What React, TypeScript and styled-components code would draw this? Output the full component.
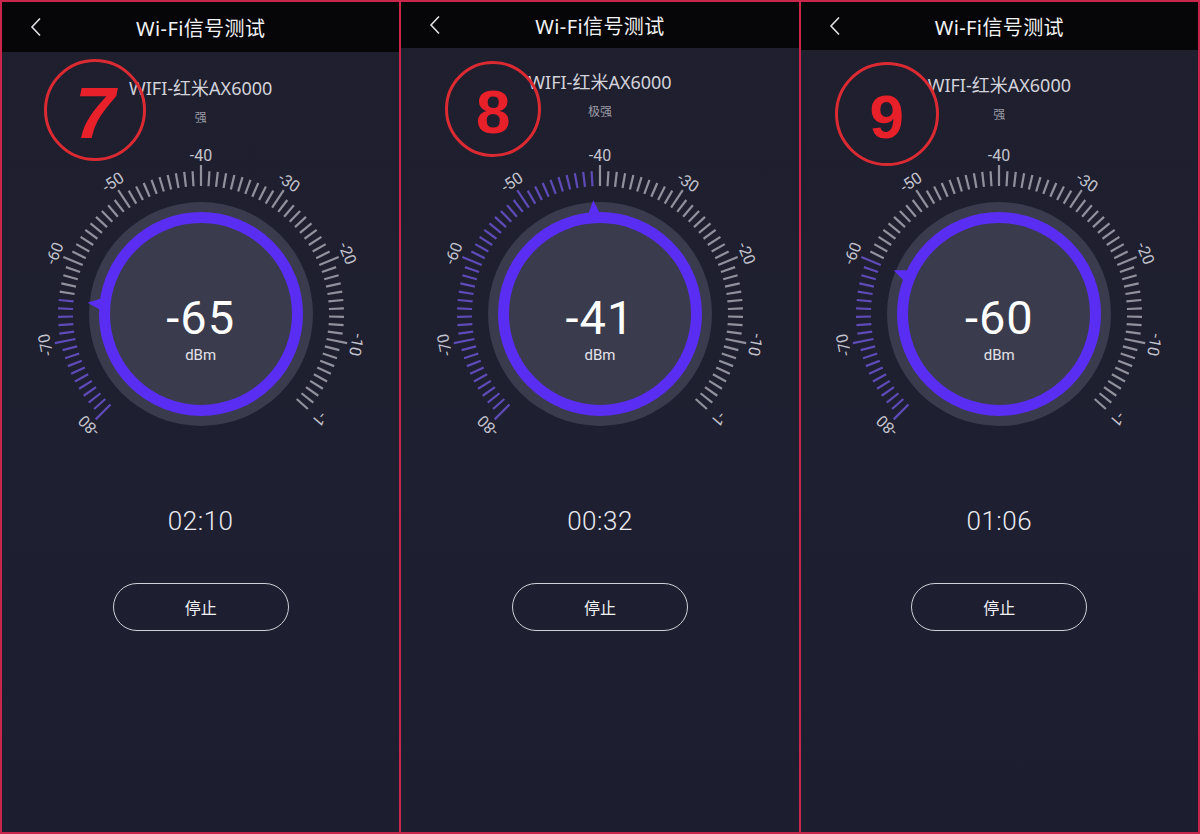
import React from 'react';
import styled, { createGlobalStyle } from 'styled-components';

const GlobalStyle = createGlobalStyle`
  html, body {
    margin: 0;
    padding: 0;
    background: #c8264a;
  }
  * {
    box-sizing: border-box;
  }
`;

// geometry of the gauge drawing
const G = { w: 360, h: 310, cx: 180, cy: 174 };
const STEP = 270 / 80;
const angleOf = (v: number) => -135 + (v + 80) * STEP;

type Shot = {
  id: number;
  headerH: number;
  name: string;
  level: string;
  value: number;
  time: string;
  mark: { x: number; y: number; r: number; size: number; italic?: boolean };
};

const shots: Shot[] = [
  { id: 7, headerH: 50, name: 'WIFI-红米AX6000', level: '强', value: -65, time: '02:10', mark: { x: 93, y: 108, r: 51, size: 72, italic: true } },
  { id: 8, headerH: 46, name: 'WIFI-红米AX6000', level: '极强', value: -41, time: '00:32', mark: { x: 92, y: 107, r: 48, size: 62 } },
  { id: 9, headerH: 48, name: 'WIFI-红米AX6000', level: '强', value: -60, time: '01:06', mark: { x: 86, y: 112, r: 52, size: 62 } },
];

const Page = styled.div`
  width: 1200px;
  height: 834px;
  padding: 2px;
  display: flex;
  gap: 2px;
  background: #c8264a;
`;

const Panel = styled.section`
  position: relative;
  flex: 1;
  display: flex;
  flex-direction: column;
  align-items: center;
  background: linear-gradient(180deg, #1f1f2e 0%, #1e1f30 60%, #1c1e30 100%);
  font-family: 'Noto Sans', 'Noto Sans CJK SC', sans-serif;
  overflow: hidden;
`;

const Header = styled.header<{ $h: number }>`
  width: 100%;
  height: ${(p) => p.$h}px;
  background: #060608;
  display: grid;
  grid-template-columns: 1fr auto 1fr;
  align-items: center;
`;

const Back = styled.div`
  padding-left: 28px;
  display: flex;
  align-items: center;
`;

const Title = styled.h1`
  margin: 0;
  font-size: 20px;
  font-weight: 400;
  color: #f2f2f4;
  letter-spacing: 0.4px;
`;

const Info = styled.div<{ $h: number }>`
  height: ${(p) => 138 - p.$h}px;
  padding-top: ${(p) => 26 - (50 - p.$h) / 2}px;
  display: flex;
  flex-direction: column;
  align-items: center;
`;

const NetName = styled.div`
  font-size: 18px;
  line-height: 20px;
  color: #d3d3db;
`;

const Level = styled.div`
  margin-top: 12px;
  font-size: 12px;
  line-height: 16px;
  color: #9c9ca6;
`;

const GaugeWrap = styled.div`
  display: grid;
  width: ${G.w}px;
  height: ${G.h}px;
  & > * {
    grid-area: 1 / 1;
  }
`;

const Readout = styled.div`
  align-self: start;
  justify-self: center;
  margin-top: 154px;
  display: flex;
  flex-direction: column;
  align-items: center;
  font-family: Roboto, 'Noto Sans', sans-serif;
  color: #fff;
`;

const Big = styled.div`
  font-size: 47px;
  line-height: 48px;
  font-weight: 400;
  letter-spacing: 1px;
`;

const Unit = styled.div`
  margin-top: 4px;
  font-size: 15px;
  line-height: 18px;
  color: #e2e2ea;
`;

const TickLabel = styled.text`
  font-family: Roboto, 'Noto Sans', sans-serif;
  font-size: 16px;
  fill: #c4c4ce;
`;

const Timer = styled.div`
  margin-top: 56px;
  font-family: Roboto, 'Noto Sans', sans-serif;
  font-size: 26px;
  line-height: 30px;
  font-weight: 300;
  color: #eaeaf0;
  letter-spacing: 0.5px;
`;

const StopButton = styled.button`
  margin-top: 47px;
  width: 176px;
  height: 48px;
  border-radius: 24px;
  border: 1.5px solid #cfd0d8;
  background: transparent;
  color: #f2f2f4;
  font-family: 'Noto Sans CJK SC', sans-serif;
  font-size: 16px;
`;

// red hand-drawn annotation over the screenshot
const Mark = styled.div<{ $x: number; $y: number; $r: number }>`
  position: absolute;
  left: ${(p) => p.$x - p.$r}px;
  top: ${(p) => p.$y - p.$r}px;
  width: ${(p) => p.$r * 2}px;
  height: ${(p) => p.$r * 2}px;
  border: 3px solid #dc2a33;
  border-radius: 50%;
  display: flex;
  align-items: center;
  justify-content: center;
`;

const MarkNum = styled.span<{ $size: number; $italic?: boolean }>`
  font-family: 'Liberation Sans', Arial, sans-serif;
  font-weight: 700;
  font-size: ${(p) => p.$size}px;
  font-style: ${(p) => (p.$italic ? 'italic' : 'normal')};
  line-height: 1;
  color: #e8202a;
  margin-top: 6px;
`;

const Chevron = () => (
  <svg width="12" height="20" viewBox="0 0 12 20">
    <polyline points="10,1.5 2,10 10,18.5" fill="none" stroke="#e0e0e6" strokeWidth="1.6" />
  </svg>
);

const Gauge: React.FC<{ value: number }> = ({ value }) => {
  const { cx, cy } = G;
  const ticks = [];
  for (let i = 0; i < 80; i++) {
    const v = -80 + i;
    const a = angleOf(v);
    const major = v % 10 === 0;
    const on = v <= value;
    ticks.push(
      <line
        key={v}
        x1={cx}
        y1={cy - 128}
        x2={cx}
        y2={cy - (major ? 149 : 143)}
        stroke={on ? '#6650c8' : '#a6a6b2'}
        strokeOpacity={on ? 0.9 : 0.85}
        strokeWidth={2.2}
        transform={`rotate(${a} ${cx} ${cy})`}
      />
    );
  }
  const labels = [-80, -70, -60, -50, -40, -30, -20, -10, -1];
  const va = angleOf(value);
  return (
    <svg width={G.w} height={G.h} viewBox={`0 0 ${G.w} ${G.h}`}>
      {ticks}
      {labels.map((l) => (
        <TickLabel
          key={l}
          x={cx}
          y={cy - 153}
          textAnchor="middle"
          transform={`rotate(${angleOf(l)} ${cx} ${cy})`}
        >
          {l}
        </TickLabel>
      ))}
      <circle cx={cx} cy={cy} r={112} fill="#3a3b4c" />
      <circle cx={cx} cy={cy} r={96.5} fill="none" stroke="#5a2ef2" strokeWidth={11} />
      <polygon
        points={`${cx},${cy - 114} ${cx - 6},${cy - 100} ${cx + 6},${cy - 100}`}
        fill="#5a2ef2"
        transform={`rotate(${va} ${cx} ${cy})`}
      />
    </svg>
  );
};

const Screen: React.FC<{ s: Shot }> = ({ s }) => (
  <Panel>
    <Header $h={s.headerH}>
      <Back>
        <Chevron />
      </Back>
      <Title>Wi-Fi信号测试</Title>
      <div />
    </Header>
    <Info $h={s.headerH}>
      <NetName>{s.name}</NetName>
      <Level>{s.level}</Level>
    </Info>
    <GaugeWrap>
      <Gauge value={s.value} />
      <Readout>
        <Big>{s.value}</Big>
        <Unit>dBm</Unit>
      </Readout>
    </GaugeWrap>
    <Timer>{s.time}</Timer>
    <StopButton>停止</StopButton>
    <Mark $x={s.mark.x} $y={s.mark.y} $r={s.mark.r}>
      <MarkNum $size={s.mark.size} $italic={s.mark.italic}>
        {s.id}
      </MarkNum>
    </Mark>
  </Panel>
);

const App: React.FC = () => (
  <>
    <GlobalStyle />
    <Page>
      {shots.map((s) => (
        <Screen key={s.id} s={s} />
      ))}
    </Page>
  </>
);

export default App;
